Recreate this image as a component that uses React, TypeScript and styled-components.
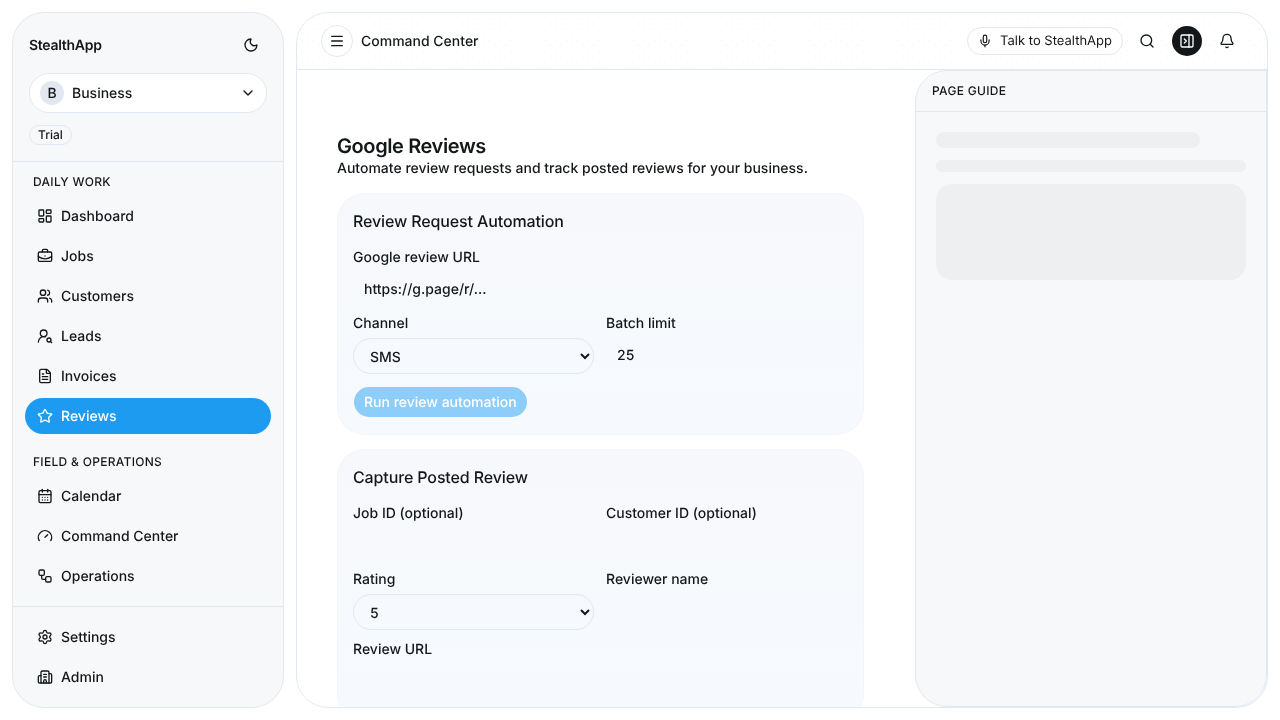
import { FC } from "react";
import styled, { createGlobalStyle } from "styled-components";
import {
  Bell,
  BriefcaseBusiness,
  Building2,
  CalendarDays,
  ChevronDown,
  FileText,
  Gauge,
  LayoutDashboard,
  LucideIcon,
  Menu,
  Mic,
  Moon,
  PanelRightClose,
  Search,
  Settings,
  Star,
  UserRoundSearch,
  Users,
  Workflow,
} from "lucide-react";

const GlobalStyle = createGlobalStyle`
  html, body, #root {
    margin: 0;
    height: 100%;
  }
  body {
    background: #fff;
    color: #14171a;
    font-family: Inter, "Liberation Sans", sans-serif;
    font-size: 14px;
    text-rendering: geometricPrecision;
    -webkit-font-smoothing: antialiased;
    overflow: hidden;
  }
  * {
    box-sizing: border-box;
  }
`;

const Shell = styled.div`
  display: flex;
  gap: 12px;
  height: 720px;
  padding: 12px;
  will-change: transform;
  opacity: 0.999;
`;

const Sidebar = styled.aside`
  display: flex;
  flex-direction: column;
  flex: 0 0 272px;
  background: #f7f8fa;
  border: 1px solid #e2e8f0;
  border-radius: 32px;
  overflow: hidden;
`;

const SidebarTop = styled.div`
  display: flex;
  flex-direction: column;
  align-items: flex-start;
  padding: 16px;
  border-bottom: 1px solid #e2e8f0;
`;

const BrandRow = styled.div`
  display: flex;
  align-items: center;
  justify-content: space-between;
  align-self: stretch;
  height: 32px;
  padding-right: 8px;
  margin-bottom: 12px;
  font-weight: 600;
  letter-spacing: -0.02em;
`;

const Switcher = styled.div`
  display: flex;
  align-items: center;
  align-self: stretch;
  gap: 8px;
  height: 40px;
  padding: 0 10px;
  background: #fff;
  border: 1px solid #e2e8f0;
  border-radius: 20px;
  font-weight: 500;
  svg {
    margin-left: auto;
  }
`;

const Avatar = styled.span`
  display: flex;
  align-items: center;
  justify-content: center;
  width: 24px;
  height: 24px;
  border-radius: 50%;
  background: #e2e8f0;
`;

const TrialTag = styled.span`
  margin-top: 12px;
  padding: 0 8px;
  height: 20px;
  line-height: 18px;
  font-size: 12px;
  font-weight: 500;
  border: 1px solid #e2e8f0;
  border-radius: 10px;
`;

const NavScroll = styled.nav`
  flex: 1;
  padding: 12px 12px 0;
  border-bottom: 1px solid #e2e8f0;
`;

const NavBottom = styled.nav`
  padding: 12px;
`;

const SectionLabel = styled.div`
  height: 16px;
  line-height: 16px;
  margin: 0 8px 8px;
  font-size: 12px;
  font-weight: 500;
  letter-spacing: 0.3px;
`;

const NavGroup = styled.div`
  display: flex;
  flex-direction: column;
  gap: 4px;
  &:not(:last-child) {
    margin-bottom: 20px;
  }
`;

const NavItem = styled.a<{ $active?: boolean }>`
  display: flex;
  align-items: center;
  gap: 8px;
  height: 36px;
  padding: 0 12px;
  border-radius: 18px;
  font-weight: 500;
  background: ${(p) => (p.$active ? "#1d9bf0" : "transparent")};
  color: ${(p) => (p.$active ? "#fff" : "#14171a")};
`;

const Main = styled.main`
  flex: 1;
  display: flex;
  flex-direction: column;
  min-width: 0;
  background: #fff;
  border: 1px solid #e2e8f0;
  border-radius: 32px;
  overflow: hidden;
`;

const TopBar = styled.header`
  display: flex;
  align-items: center;
  flex: 0 0 57px;
  gap: 8px;
  padding: 0 24px;
  background-image: radial-gradient(#eef1f5 0.6px, transparent 0.7px), radial-gradient(#eef1f5 0.6px, transparent 0.7px);
  background-size: 11px 11px;
  background-position: 0 0, 5.5px 5.5px;
  border-bottom: 1px solid #e2e8f0;
`;

const CircleButton = styled.button`
  display: flex;
  align-items: center;
  justify-content: center;
  width: 32px;
  height: 32px;
  padding: 0;
  background: #fff;
  color: #14171a;
  border: 1px solid #e2e8f0;
  border-radius: 50%;
`;

const PageName = styled.span`
  font-weight: 500;
`;

const TopActions = styled.div`
  display: flex;
  align-items: center;
  gap: 10px;
  margin-left: auto;
  margin-right: 1px;
`;

const TalkButton = styled.button`
  display: flex;
  align-items: center;
  gap: 8px;
  height: 28px;
  padding: 0 10px;
  margin-right: -1px;
  background: #fff;
  color: #14171a;
  border: 1px solid #e2e8f0;
  border-radius: 14px;
  font: 400 13px Inter, sans-serif;
  text-rendering: geometricPrecision;
`;

const IconButton = styled.span<{ $dark?: boolean }>`
  display: flex;
  align-items: center;
  justify-content: center;
  width: 30px;
  height: 30px;
  border-radius: 50%;
  background: ${(p) => (p.$dark ? "#14171a" : "transparent")};
  color: ${(p) => (p.$dark ? "#fff" : "#14171a")};
`;

const Body = styled.div`
  flex: 1;
  display: flex;
  min-height: 0;
`;

const Content = styled.section`
  flex: 1;
  min-width: 0;
  padding: 64px 51px 0 40px;
  overflow: hidden;
`;

const Title = styled.h1`
  margin: 0;
  font-size: 20px;
  line-height: 24px;
  font-weight: 600;
  letter-spacing: -0.02em;
`;

const Subtitle = styled.p`
  margin: 1px 0 14px;
  line-height: 20px;
  font-weight: 500;
`;

const Card = styled.div`
  padding: 15px;
  margin-bottom: 14px;
  background: linear-gradient(180deg, #f7f8fb 0%, #f6fafe 100%);
  border: 1px dotted #eef1f4;
  border-radius: 28px;
`;

const CardTitle = styled.h2`
  margin: 0 0 14.5px;
  font-size: 16px;
  line-height: 24px;
  font-weight: 500;
  letter-spacing: -0.008em;
`;

const FieldGrid = styled.div`
  display: grid;
  grid-template-columns: 241px 241px;
  column-gap: 12px;
`;

const Field = styled.label<{ $wide?: boolean }>`
  display: flex;
  flex-direction: column;
  grid-column: ${(p) => (p.$wide ? "1 / -1" : "auto")};
  margin-bottom: 8.5px;
`;

const FieldLabel = styled.span`
  height: 20px;
  line-height: 20px;
  font-weight: 500;
  margin-bottom: 3.5px;
`;

const PlainInput = styled.input`
  height: 34px;
  padding: 2px 11px 0;
  background: transparent;
  border: 0;
  outline: 0;
  color: #14171a;
  font: 500 14px Inter, sans-serif;
  text-rendering: geometricPrecision;
  &::placeholder {
    color: #14171a;
    opacity: 1;
  }
`;

const PillSelect = styled.select`
  height: 36px;
  margin: 1px 0;
  padding: 2px 12px 0;
  background: transparent;
  border: 1px solid #e2e8f0;
  border-radius: 18px;
  color: #14171a;
  font: 500 14px Inter, sans-serif;
  text-rendering: geometricPrecision;
`;

const RunButton = styled.button`
  display: block;
  height: 30px;
  padding: 0 10px;
  margin: 3.5px 0 2px 1px;
  background: #8ccdfa;
  color: #fff;
  border: 0;
  border-radius: 15px;
  font: 500 14px Inter, sans-serif;
  text-rendering: geometricPrecision;
`;

const Guide = styled.aside`
  flex: 0 0 352px;
  display: flex;
  flex-direction: column;
  background: #f7f8fa;
  border: 1px solid #e2e8f0;
  border-radius: 32px 0 32px 32px;
`;

const GuideHead = styled.div`
  display: flex;
  align-items: center;
  flex: 0 0 41px;
  padding: 0 16px 1px;
  font-size: 12px;
  font-weight: 500;
  letter-spacing: 0.3px;
  border-bottom: 1px solid #e2e8f0;
`;

const GuideBody = styled.div`
  display: flex;
  flex-direction: column;
  gap: 12px;
  padding: 20px;
`;

const Skeleton = styled.div<{ $w: string; $h: number; $r: number }>`
  width: ${(p) => p.$w};
  height: ${(p) => p.$h}px;
  border-radius: ${(p) => p.$r}px;
  background: #eeeff1;
`;

const dailyWork: [string, LucideIcon, boolean?][] = [
  ["Dashboard", LayoutDashboard],
  ["Jobs", BriefcaseBusiness],
  ["Customers", Users],
  ["Leads", UserRoundSearch],
  ["Invoices", FileText],
  ["Reviews", Star, true],
];

const fieldOps: [string, LucideIcon][] = [
  ["Calendar", CalendarDays],
  ["Command Center", Gauge],
  ["Operations", Workflow],
];

const bottomItems: [string, LucideIcon][] = [
  ["Settings", Settings],
  ["Admin", Building2],
];

const App: FC = () => {
  return (
    <>
      <GlobalStyle />
      <Shell>
        <Sidebar>
          <SidebarTop>
            <BrandRow>
              <span>StealthApp</span>
              <Moon size={16} />
            </BrandRow>
            <Switcher>
              <Avatar>B</Avatar>
              <span>Business</span>
              <ChevronDown size={16} />
            </Switcher>
            <TrialTag>Trial</TrialTag>
          </SidebarTop>
          <NavScroll>
            <SectionLabel>DAILY WORK</SectionLabel>
            <NavGroup>
              {dailyWork.map(([label, Icon, active]) => (
                <NavItem key={label} $active={active}>
                  <Icon size={16} />
                  {label}
                </NavItem>
              ))}
            </NavGroup>
            <SectionLabel>FIELD &amp; OPERATIONS</SectionLabel>
            <NavGroup>
              {fieldOps.map(([label, Icon]) => (
                <NavItem key={label}>
                  <Icon size={16} />
                  {label}
                </NavItem>
              ))}
            </NavGroup>
          </NavScroll>
          <NavBottom>
            <NavGroup>
              {bottomItems.map(([label, Icon]) => (
                <NavItem key={label}>
                  <Icon size={16} />
                  {label}
                </NavItem>
              ))}
            </NavGroup>
          </NavBottom>
        </Sidebar>
        <Main>
          <TopBar>
            <CircleButton>
              <Menu size={16} />
            </CircleButton>
            <PageName>Command Center</PageName>
            <TopActions>
              <TalkButton>
                <Mic size={14} />
                Talk to StealthApp
              </TalkButton>
              <IconButton>
                <Search size={16} />
              </IconButton>
              <IconButton $dark>
                <PanelRightClose size={16} />
              </IconButton>
              <IconButton>
                <Bell size={16} />
              </IconButton>
            </TopActions>
          </TopBar>
          <Body>
            <Content>
              <Title>Google Reviews</Title>
              <Subtitle>Automate review requests and track posted reviews for your business.</Subtitle>
              <Card>
                <CardTitle>Review Request Automation</CardTitle>
                <FieldGrid>
                  <Field $wide>
                    <FieldLabel>Google review URL</FieldLabel>
                    <PlainInput placeholder="https://g.page/r/..." />
                  </Field>
                  <Field>
                    <FieldLabel>Channel</FieldLabel>
                    <PillSelect defaultValue="SMS">
                      <option>SMS</option>
                      <option>Email</option>
                    </PillSelect>
                  </Field>
                  <Field>
                    <FieldLabel>Batch limit</FieldLabel>
                    <PlainInput defaultValue="25" />
                  </Field>
                </FieldGrid>
                <RunButton>Run review automation</RunButton>
              </Card>
              <Card>
                <CardTitle>Capture Posted Review</CardTitle>
                <FieldGrid>
                  <Field>
                    <FieldLabel>Job ID (optional)</FieldLabel>
                    <PlainInput />
                  </Field>
                  <Field>
                    <FieldLabel>Customer ID (optional)</FieldLabel>
                    <PlainInput />
                  </Field>
                  <Field>
                    <FieldLabel>Rating</FieldLabel>
                    <PillSelect defaultValue="5">
                      <option>5</option>
                      <option>4</option>
                    </PillSelect>
                  </Field>
                  <Field>
                    <FieldLabel>Reviewer name</FieldLabel>
                    <PlainInput />
                  </Field>
                  <Field $wide>
                    <FieldLabel>Review URL</FieldLabel>
                    <PlainInput />
                  </Field>
                </FieldGrid>
              </Card>
            </Content>
            <Guide>
              <GuideHead>PAGE GUIDE</GuideHead>
              <GuideBody>
                <Skeleton $w="264px" $h={16} $r={8} />
                <Skeleton $w="100%" $h={12} $r={6} />
                <Skeleton $w="100%" $h={96} $r={16} />
              </GuideBody>
            </Guide>
          </Body>
        </Main>
      </Shell>
    </>
  );
};

export default App;
